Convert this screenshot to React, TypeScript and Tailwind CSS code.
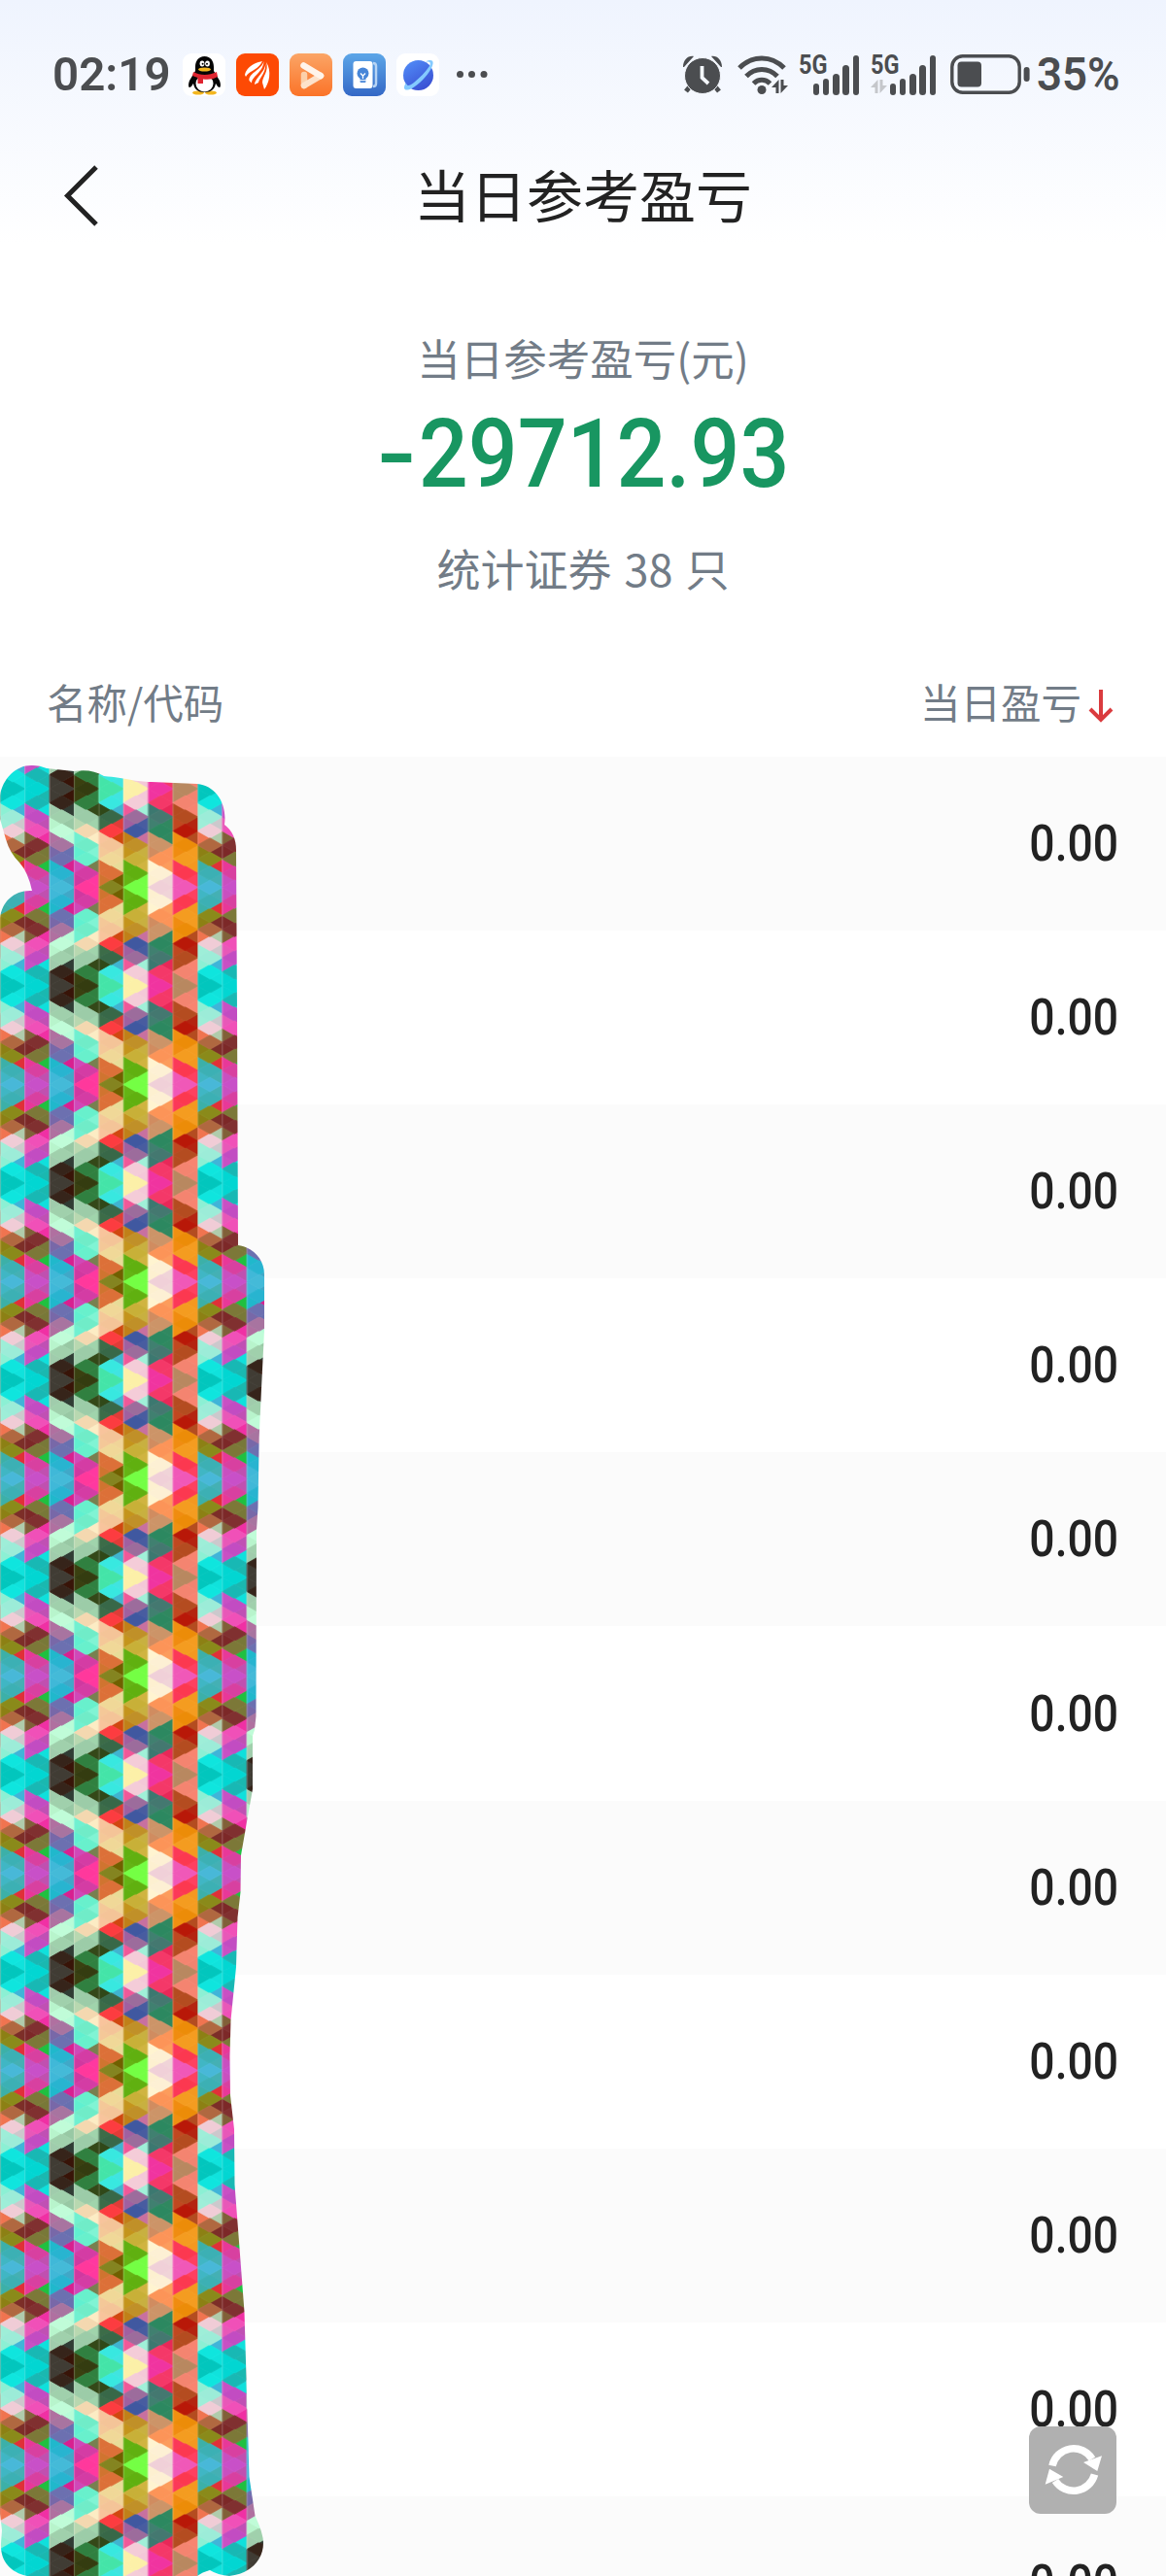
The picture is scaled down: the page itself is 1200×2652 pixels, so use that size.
import { Fragment } from "react";

const rows = Array.from({ length: 11 }, (_, i) => ({ id: i + 1, profit: "0.00" }));

// One entry per mosaic column: left triangles, right triangles and centre diamonds, top to bottom
const mosaic = [
  {
    left: ["#02c6bd", "#8cf0d4", "#9eeed8", "#f07450", "#8c8014", "#3cb0a8", "#40b6c4"],
    right: ["#10e2dc", "#40b4d8", "#ccc8cc", "#b0ccac", "#7c2e28", "#e03038", "#44b0b4"],
    mid: ["#02c6bd", "#0fe5de", "#9cecd8", "#f0ccd6", "#b06840", "#8a8a1a", "#3cb0b4", "#48b8d8"],
  },
  {
    left: ["#02d6d2", "#c850c4", "#e858b8", "#806038", "#7c2828", "#e83898", "#c850c0"],
    right: ["#1ab8b0", "#10e0dc", "#c050b4", "#f030a4", "#787838", "#20c040", "#c050b0"],
    mid: ["#02d6d2", "#18b8b4", "#c24cc2", "#f050b8", "#803030", "#7c7838", "#d840a0", "#c850c8"],
  },
  {
    left: ["#403c34", "#a0ccac", "#b8f4cc", "#b070a0", "#7868a8", "#20b8cc", "#40b8d8"],
    right: ["#381408", "#303c34", "#98c8a4", "#b8fcd8", "#6870b0", "#d82090", "#40a8c8"],
    mid: ["#403c34", "#36241a", "#a0d0ac", "#c0fcd8", "#a874a0", "#6c70b0", "#28b4d0", "#44bad8"],
  },
  {
    left: ["#3a4010", "#9ccca8", "#b8d8b0", "#70f0d0", "#60f0d0", "#d048b8", "#d038a0"],
    right: ["#308040", "#344818", "#a0d4ac", "#fcecc4", "#80f4d4", "#788050", "#ff38a0"],
    mid: ["#343c10", "#308040", "#9ccca8", "#f4d8b0", "#70ecc8", "#68f0cc", "#d43ca4", "#ff389c"],
  },
  {
    left: ["#44e4a8", "#304818", "#3c6c48", "#f8c49c", "#f4c898", "#dc7038", "#d07430"],
    right: ["#40e4e0", "#40b4d0", "#e03c38", "#d04810", "#f0d498", "#e8dc98", "#706000"],
    mid: ["#44e4a8", "#38e8e0", "#386848", "#fc3c40", "#f4c498", "#f0d898", "#dc7038", "#848420"],
  },
  {
    left: ["#fcf0a8", "#f05898", "#a060a0", "#c08018", "#c4941c", "#60b010", "#64b414"],
    right: ["#f4c8d8", "#a0f0d8", "#485ca0", "#c870a0", "#c8b040", "#d0b440", "#74ff44"],
    mid: ["#fcf0a8", "#f4ccd8", "#9c6c9c", "#4058a0", "#c09028", "#c8b038", "#60b010", "#74ff44"],
  },
  {
    left: ["#f034a0", "#3c7870", "#408070", "#cc9468", "#d08c60", "#fff4d0", "#fdf0d0"],
    right: ["#f43868", "#e82858", "#308860", "#308860", "#fc9458", "#fc9c5c", "#f0d4d8"],
    mid: ["#f034a0", "#f43868", "#447870", "#2c8860", "#cc9468", "#fc9458", "#fdf0d4", "#f0d0d8"],
  },
  {
    left: ["#b88860", "#b44c20", "#c04820", "#f09010", "#f08c10", "#fc3858", "#f058b8"],
    right: ["#f08470", "#f88470", "#b42410", "#b44c20", "#f49c20", "#f49820", "#ff4060"],
    mid: ["#b88860", "#f48470", "#b44c20", "#b81808", "#ec8c08", "#f49c20", "#fc3850", "#f058b8"],
  },
];

const COL = 25.4;
const UNIT = 14.5;

function MosaicHalf() {
  return (
    <>
      {mosaic.map((col, c) => {
        const x = c * COL;
        const m = x + COL / 2;
        const r = x + COL;
        return (
          <Fragment key={c}>
            {col.left.map((color, n) => (
              <polygon
                key={`l${n}`}
                fill={color}
                stroke={color}
                strokeWidth="0.9"
                points={`${x},${n * UNIT} ${m},${(n + 0.5) * UNIT} ${x},${(n + 1) * UNIT}`}
              />
            ))}
            {col.right.map((color, n) => (
              <polygon
                key={`r${n}`}
                fill={color}
                stroke={color}
                strokeWidth="0.9"
                points={`${r},${n * UNIT} ${m},${(n + 0.5) * UNIT} ${r},${(n + 1) * UNIT}`}
              />
            ))}
            {col.mid.map((color, n) => (
              <polygon
                key={`m${n}`}
                fill={color}
                stroke={color}
                strokeWidth="0.9"
                points={`${x},${n * UNIT} ${m},${(n - 0.5) * UNIT} ${r},${n * UNIT} ${m},${(n + 0.5) * UNIT}`}
              />
            ))}
            <rect x={x - 0.3} y="0" width="0.9" height="101.5" fill="#fff" opacity="0.25" />
          </Fragment>
        );
      })}
    </>
  );
}

// Scribble that hides the security names
function MosaicMask() {
  return (
    <svg className="absolute left-0 top-0 pointer-events-none" width="280" height="1873" viewBox="0 779 280 1873">
      <defs>
        <clipPath id="half">
          <rect x="0" y="-1" width="203.2" height="103" />
        </clipPath>
        <pattern id="mosaic" x="0.2" y="812" width="203.2" height="203" patternUnits="userSpaceOnUse">
          <g clipPath="url(#half)">
            <MosaicHalf />
          </g>
          <g transform="translate(0 203) scale(1 -1)" clipPath="url(#half)">
            <MosaicHalf />
          </g>
        </pattern>
      </defs>
      <path
        fill="url(#mosaic)"
        d="M0 819 C3 801 17 787 34 788 Q41 788 48 791 L76 794 Q94 791 107 799 C130 801 140 805 156 805 L203 807 C222 809 234 827 231 849 Q243 858 243 875 L244 1040 L245 1282 C260 1284 272 1296 272 1312 L272 1370 L269 1430 L266.7 1480 L265.5 1552 L264 1575 L263.5 1767 L262 1781 L260 1787 L260 1842 L255 1870 L248 1910 L247.5 1948 L244.5 1974 L243 2025 L237.5 2080 L236.5 2117 L237 2157 L241 2192 L241.5 2249 L251.5 2380 L256.5 2550 L262.5 2590 Q271 2608 271 2618 C271 2636 257 2650 236 2652 Q224 2651 216 2646 Q208 2648 203 2652 L28 2652 C10 2648 0 2636 1 2618 L2 2605 L0 2588 V945 C2 928 15 916 33 917 Q29 898 20 888 Q10 878 6 864 L0 843 Z"
      />
    </svg>
  );
}

function AppIcons() {
  return (
    <svg width="316" height="48" viewBox="0 0 316 48">
      <defs>
        <linearGradient id="orange" x1="0" y1="0" x2="0" y2="1">
          <stop offset="0" stopColor="#fba566" />
          <stop offset="1" stopColor="#fb7328" />
        </linearGradient>
        <linearGradient id="blue" x1="0" y1="0" x2="0" y2="1">
          <stop offset="0" stopColor="#5ca6e8" />
          <stop offset="1" stopColor="#3468c6" />
        </linearGradient>
        <linearGradient id="planet" x1="0" y1="0" x2="0.6" y2="1">
          <stop offset="0" stopColor="#5290fa" />
          <stop offset="1" stopColor="#3b52d4" />
        </linearGradient>
      </defs>

      {/* Penguin */}
      <g transform="translate(0 2)">
        <rect width="44" height="44" rx="9" fill="#fff" />
        <ellipse cx="16" cy="40.5" rx="6" ry="2" fill="#f3b61f" />
        <ellipse cx="29" cy="40.5" rx="6" ry="2" fill="#f3b61f" />
        <path d="M22.500 3C16 3 13 8 13 14v4L7 28c-1.500 4-1 7 0 7 2 0 3-3 4-4 1 6 5 9 11.500 9S33 37 34 31c1 1 2 4 4 4 1 0 1.500-3 0-7L32 18v-4C32 8 29 3 22.500 3Z" fill="#050505" />
        <ellipse cx="22.5" cy="31" rx="9" ry="8.5" fill="#fff" />
        <path d="M11 19c7 4 16 4 24 0l1 5c-5 3-10 3-15 2.500V31h-5.500v-6L10 23Z" fill="#df2430" />
        <ellipse cx="20" cy="10.500" rx="2.400" ry="3" fill="#fff" />
        <ellipse cx="25.500" cy="10.500" rx="2.400" ry="3" fill="#fff" />
        <circle cx="20.600" cy="10.800" r="1" fill="#050505" />
        <circle cx="25" cy="10.800" r="1" fill="#050505" />
        <ellipse cx="22.500" cy="16.500" rx="6.500" ry="2" fill="#f3b61f" />
      </g>

      {/* Brokerage */}
      <g transform="translate(55 2)">
        <rect width="44" height="44" rx="9" fill="#fd4a04" />
        <path d="M27 8C21 9 11 13 9 22l1 2C13 18 23 17 27 8Z" fill="#fff" />
        <path d="M28.500 8c-2 9-16 12-15 20l2.500 2.500c0-7 12-11 12.500-22.500Z" fill="#fff" />
        <path d="M30 8c2 10-10 16-11 24l4-2c1-5 9-11 7-22Z" fill="#fff" />
        <path d="M31 9c3 9-4 15-4 21l2 7c5-6 8-19 2-28Z" fill="#fff" />
      </g>

      {/* Video */}
      <g transform="translate(110 2)">
        <rect width="44" height="44" rx="9" fill="url(#orange)" />
        <path d="M15 22V33" stroke="#fcd0aa" strokeWidth="6.500" strokeLinecap="round" />
        <path d="M15 33 32 23" stroke="#fde2ca" strokeWidth="6.500" strokeLinecap="round" />
        <path d="M14.500 12.500 32 23" stroke="#fff4ea" strokeWidth="6.500" strokeLinecap="round" />
      </g>

      {/* Notes */}
      <g transform="translate(165 2)">
        <rect width="44" height="44" rx="9" fill="url(#blue)" />
        <path d="M31 10q3 0 3 3v18q0 3-3 3" fill="none" stroke="#b6d4f5" strokeWidth="2.500" />
        <rect x="10.500" y="8" width="20" height="28" rx="3" fill="#fff" />
        <circle cx="20.500" cy="20.500" r="6" fill="#4786d8" />
        <rect x="17.500" y="24" width="6" height="6" rx="1" fill="#4786d8" />
        <path d="M18 20.500 20.500 23l2.500-2.500M20.500 23v3" stroke="#fff" strokeWidth="1.300" fill="none" />
        <path d="M17 27.700h7" stroke="#fff" strokeWidth="1" />
      </g>

      {/* Browser */}
      <g transform="translate(220 2)">
        <rect width="44" height="44" rx="9" fill="#fff" />
        <circle cx="22.500" cy="22.500" r="15.500" fill="url(#planet)" />
        <path d="M30 8.500C37 5 40 8 35.500 16 31 24 23 32 16 36c-8 4-10 0-6-6 0 4 3 4 8 0 6-5 12-11 16-17 2-4 0-5-4-4.500Z" fill="#84caff" />
      </g>

      <g fill="#4b4d50">
        <circle cx="285.500" cy="23.500" r="3.500" />
        <circle cx="297.500" cy="23.500" r="3.500" />
        <circle cx="310" cy="23.500" r="3.500" />
      </g>
    </svg>
  );
}

function AlarmIcon() {
  return (
    <svg width="42" height="42" viewBox="0 0 42 42" fill="#4b4d50">
      <path d="m9 32-5 6M33 32l5 6" stroke="#4b4d50" strokeWidth="5" />
      <path d="M1 13C1 6 6 1 12 2L2 13ZM41 13C41 6 36 1 30 2l10 11Z" />
      <circle cx="21" cy="22" r="18.500" stroke="#f4f7fd" strokeWidth="1" />
      <path d="M20.500 12v12l6.500 6" fill="none" stroke="#f4f7fd" strokeWidth="3.800" />
    </svg>
  );
}

function DataArrows({ className }: { className?: string }) {
  return (
    <svg className={className} width="17" height="14" viewBox="0 0 17 14" fill="currentColor">
      <path d="M7.500 0v14H4.500V8H0ZM9.500 14V0h3v6H17Z" />
    </svg>
  );
}

function WifiIcon() {
  return (
    <div className="relative w-[52px] h-[42px]">
      <svg width="52" height="42" viewBox="0 0 52 42" fill="none" stroke="#4b4d50" strokeWidth="5">
        <path d="M2 14C15 .500 35 .500 48 14" />
        <path d="M9 22.500C18 13 32 13 41 22.500" />
        <path d="M16.500 30C21.500 25 28.500 25 33.500 30" />
        <circle cx="25" cy="36.500" r="4.500" fill="#4b4d50" stroke="none" />
      </svg>
      <DataArrows className="absolute right-0 bottom-0.5 text-[#4b4d50]" />
    </div>
  );
}

function Signal({ idle }: { idle?: boolean }) {
  return (
    <div className={`relative h-[42px] ${idle ? "w-[67px]" : "w-[62px]"}`}>
      <span className="absolute left-0 top-0 origin-left scale-x-[0.84] text-[28px] leading-[22px] font-bold">5G</span>
      {idle && <DataArrows className="absolute left-0 bottom-0.5 text-[#c5c7cb]" />}
      <div className="absolute right-0 bottom-0 flex items-end gap-[3.7px]">
        <i className="w-[6.500px] h-[12px] rounded-sm bg-[#4b4d50]" />
        <i className="w-[6.500px] h-[17px] rounded-sm bg-[#4b4d50]" />
        <i className="w-[6.500px] h-[22px] rounded-sm bg-[#4b4d50]" />
        <i className="w-[6.500px] h-[31px] rounded-sm bg-[#4b4d50]" />
        <i className="w-[6.500px] h-[41px] rounded-sm bg-[#4b4d50]" />
      </div>
    </div>
  );
}

function Battery() {
  return (
    <svg width="82" height="42" viewBox="0 0 82 42">
      <rect x="1.800" y="1.800" width="69.400" height="37.400" rx="11" fill="none" stroke="#4b4d50" strokeWidth="3.400" />
      <rect x="7.500" y="7.500" width="24.500" height="26" rx="4" fill="#4b4d50" />
      <rect x="75.600" y="13" width="6" height="15" rx="3" fill="#4b4d50" />
    </svg>
  );
}

function StatusBar() {
  return (
    <div className="flex items-center h-[152px] pt-px pl-[54px] font-['Roboto',sans-serif] text-[#4b4d50]">
      <span className="w-[134px] origin-left scale-x-[0.97] text-[49px] leading-none font-semibold">02:19</span>
      <AppIcons />
      <div className="ml-[198px] flex items-center">
        <AlarmIcon />
        <div className="ml-[15px]"><WifiIcon /></div>
        <div className="ml-[11px]"><Signal /></div>
        <div className="ml-[12px]"><Signal idle /></div>
        <div className="ml-[15px]"><Battery /></div>
        <span className="ml-[7px] origin-left scale-x-[0.93] text-[49px] leading-none font-semibold">35%</span>
      </div>
    </div>
  );
}

function TitleBar() {
  return (
    <div className="grid grid-cols-[1fr_auto_1fr] items-center h-[100px] px-[65px]">
      <button aria-label="返回" className="justify-self-start">
        <svg width="36" height="64" viewBox="0 0 36 64" fill="none" stroke="#222" strokeWidth="5">
          <path d="M34 2 4.500 31.500 34 61" />
        </svg>
      </button>
      <h1 className="pb-[7px] text-[58px] leading-none text-[#222]">当日参考盈亏</h1>
    </div>
  );
}

function Summary() {
  return (
    <section className="flex flex-col items-center text-[#727c87]">
      <p className="mt-[86px] text-[44.500px] leading-[60px]">当日参考盈亏(元)</p>
      <p className="mt-[20px] flex font-['Roboto',sans-serif] text-[98px] leading-[100px] font-medium text-[#189661]">
        <span className="origin-right scale-x-[1.2] -mr-1">-</span>
        <span className="-ml-[11px] -mr-[25px] scale-x-[0.915]">29712.93</span>
      </p>
      <p className="mt-[37px] text-[45px] leading-[60px] [word-spacing:3px]">统计证券 38 只</p>
    </section>
  );
}

export default function App() {
  return (
    <main className="relative flex flex-col w-[1200px] h-[2652px] overflow-hidden bg-white font-['Noto_Sans_CJK_SC',sans-serif]">
      <div className="bg-gradient-to-b from-[#eff4fe] to-white">
        <StatusBar />
        <TitleBar />
      </div>
      <Summary />

      <div className="flex items-center justify-between mt-auto h-[110px] pb-[3px] px-12 text-[41.500px] leading-none text-[#727c87]">
        <span>名称/代码</span>
        <span className="flex items-center">
          当日盈亏
          <svg className="relative top-[4px] ml-[7px] mr-[6px]" width="26" height="34" viewBox="0 0 26 34" fill="none" stroke="#da3b3e" strokeWidth="4">
            <path d="M13 0v31M2 20l11 11 11-11" />
          </svg>
        </span>
      </div>

      <div className="relative h-[1873px] shrink-0 overflow-hidden">
        {rows.map((row) => (
          <div key={row.id} className="flex items-center justify-end h-[179.100px] pt-px pr-[49px] odd:bg-[#fbfbfb]">
            <span className="origin-right scale-x-[0.89] font-['Roboto',sans-serif] text-[52px] leading-none font-medium text-[#222]">
              {row.profit}
            </span>
          </div>
        ))}
        <MosaicMask />
      </div>

      <button aria-label="刷新" className="absolute right-[51px] bottom-16 size-[90px] rounded-xl bg-[#aeaeae]/98">
        <svg width="90" height="90" viewBox="0 0 90 90" fill="none" stroke="#fff" strokeWidth="7.600">
          <path d="M24 40.500A22.400 22.400 0 0 1 65 33.500" />
          <path d="M67.500 49.500A22.400 22.400 0 0 1 27 56" />
          <path d="M56 37 75 30.300 70.300 46ZM16.700 59.700 21 43.700 35.300 52Z" fill="#fff" stroke="none" />
        </svg>
      </button>
    </main>
  );
}
